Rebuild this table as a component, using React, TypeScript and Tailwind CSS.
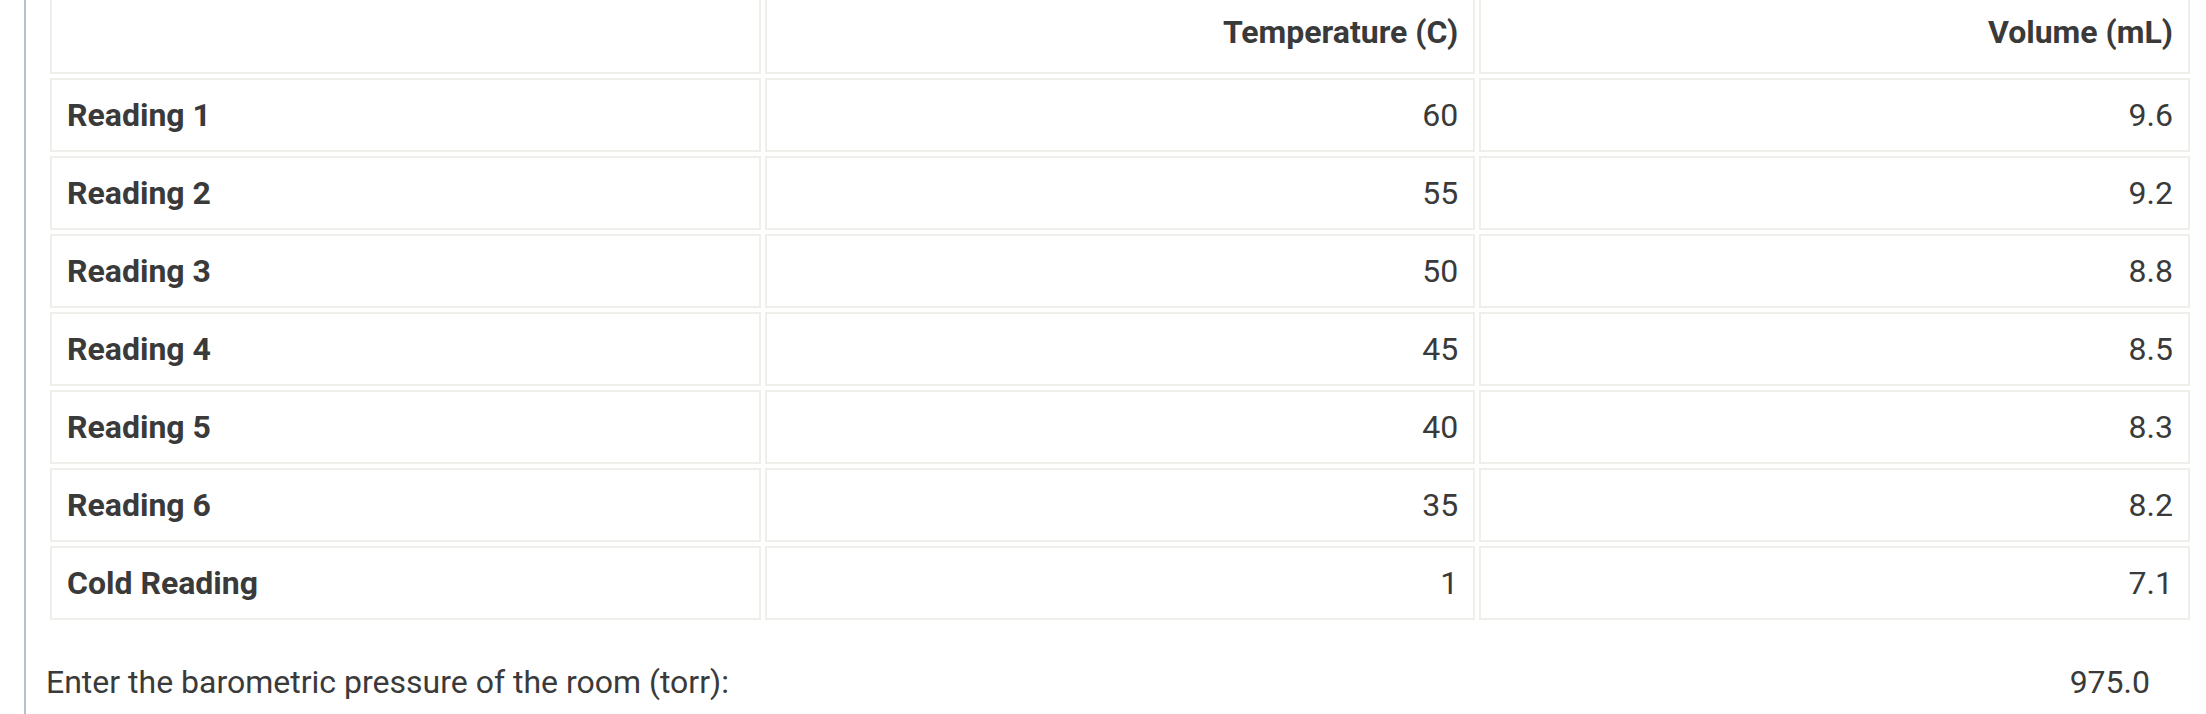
import React from 'react'

const rows = [
  { label: 'Reading 1', temp: '60', volume: '9.6' },
  { label: 'Reading 2', temp: '55', volume: '9.2' },
  { label: 'Reading 3', temp: '50', volume: '8.8' },
  { label: 'Reading 4', temp: '45', volume: '8.5' },
  { label: 'Reading 5', temp: '40', volume: '8.3' },
  { label: 'Reading 6', temp: '35', volume: '8.2' },
  { label: 'Cold Reading', temp: '1', volume: '7.1' },
]

export default function App() {
  return (
    <div className="h-[714px] overflow-hidden bg-white font-[Roboto,sans-serif] text-[32px] leading-[38px] text-[#3a3a3a]">
      <div className="ml-[24px] flex h-full flex-col border-l-2 border-[#b2c2c6] pl-[20px] pr-[12px]">
        <table className="-mt-[14px] w-full table-fixed border-separate border-spacing-1">
          <thead>
            <tr>
              <th className="border-2 border-[#eeeeea] px-[15px] py-[21px]"></th>
              <th className="border-2 border-[#eeeeea] px-[15px] py-[21px] text-right font-bold">Temperature (C)</th>
              <th className="border-2 border-[#eeeeea] px-[15px] py-[21px] text-right font-bold">Volume (mL)</th>
            </tr>
          </thead>
          <tbody>
            {rows.map(r => (
              <tr key={r.label}>
                <td className="border-2 border-[#eeeeea] px-[15px] py-[16px] text-left font-bold">{r.label}</td>
                <td className="border-2 border-[#eeeeea] px-[15px] py-[16px] text-right">{r.temp}</td>
                <td className="border-2 border-[#eeeeea] px-[15px] py-[16px] text-right">{r.volume}</td>
              </tr>
            ))}
          </tbody>
        </table>
        <div className="mt-[39px] flex items-start justify-between">
          <span>Enter the barometric pressure of the room (torr):</span>
          <span className="pr-[44px]">975.0</span>
        </div>
      </div>
    </div>
  )
}
